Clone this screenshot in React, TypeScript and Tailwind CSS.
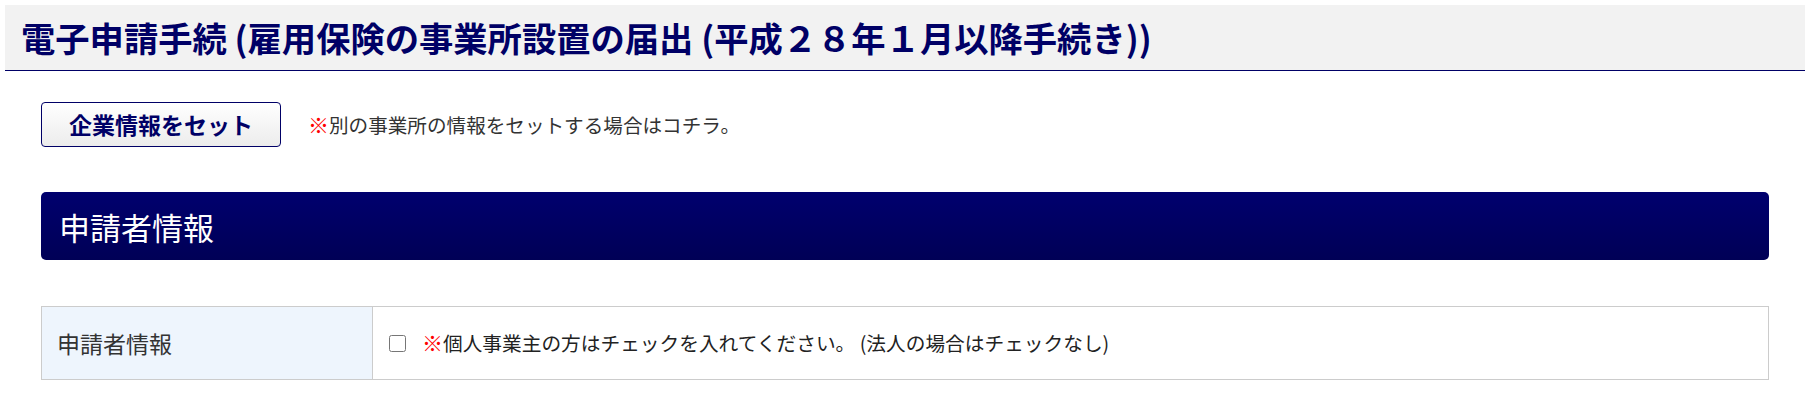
import { useState } from 'react';

const FONT = { fontFamily: '"Noto Sans CJK JP", "Noto Sans", sans-serif' };

export default function App() {
  const [isSole, setIsSole] = useState(false);

  return (
    <div className="min-h-screen bg-white text-[#333333]" style={FONT}>
      {/* Page title */}
      <div className="mt-[5px] ml-[5px] mr-[6px] h-[66px] bg-[#f2f2f2] border-b border-[#000066] flex items-center pl-[16px]">
        <h1 className="text-[34.3px] leading-none font-bold text-[#000066] whitespace-nowrap">
          電子申請手続 (雇用保険の事業所設置の届出 (平成２８年１月以降手続き))
        </h1>
      </div>

      <main className="px-[41px] pr-[42px]">
        {/* Company info */}
        <div className="flex items-center mt-[31px]">
          <button
            type="button"
            className="w-[240px] h-[45px] rounded-[4px] border border-[#000066] bg-gradient-to-b from-white to-[#ececec]
              text-[23px] font-bold text-[#000066] leading-none"
          >
            企業情報をセット
          </button>
          <p className="ml-[27px] text-[19.6px] text-[#333333] flex items-center">
            <span className="text-[#ff0000] font-black text-[21px]">※</span>
            <span>別の事業所の情報をセットする場合はコチラ。</span>
          </p>
        </div>

        {/* Section header */}
        <div className="mt-[45px] h-[68px] rounded-[5px] bg-gradient-to-b from-[#00006e] to-[#000056] flex items-center pl-[18px]">
          <h2 className="text-[31px] leading-none text-white font-normal">申請者情報</h2>
        </div>

        {/* Form table */}
        <table className="mt-[46px] w-full border-collapse">
          <tbody>
            <tr className="h-[73px]">
              <th className="w-[331px] border border-[#cccccc] bg-[#eef5fd] text-left font-normal text-[23px] text-[#333333] pl-[15px]">
                申請者情報
              </th>
              <td className="border border-[#cccccc] pl-[16px]">
                <label className="flex items-center text-[19.7px] text-[#222222]">
                  <input
                    type="checkbox"
                    checked={isSole}
                    onChange={() => setIsSole(!isSole)}
                    className="w-[17px] h-[17px] m-0"
                  />
                  <span className="ml-[16px] text-[#ff0000] font-black text-[21px]">※</span>
                  <span>個人事業主の方はチェックを入れてください。 (法人の場合はチェックなし)</span>
                </label>
              </td>
            </tr>
          </tbody>
        </table>
      </main>
    </div>
  );
}
